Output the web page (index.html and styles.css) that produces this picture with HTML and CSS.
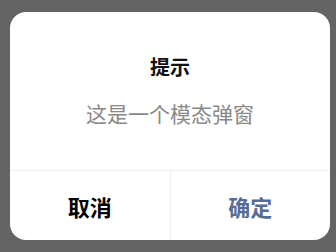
FILE: index.html
```html
<!DOCTYPE html>
<html lang="zh">
<head>
<meta charset="utf-8">
<link rel="stylesheet" href="styles.css">
</head>
<body>
<div class="dialog">
  <div class="body">
    <div class="title">提示</div>
    <div class="content">这是一个模态弹窗</div>
  </div>
  <div class="footer">
    <div class="btn cancel">取消</div>
    <div class="btn confirm">确定</div>
  </div>
</div>
</body>
</html>
```

FILE: styles.css
```css
html, body {
  margin: 0;
  padding: 0;
  width: 336px;
  height: 252px;
  background: #646464;
  overflow: hidden;
}
body {
  padding: 12px 6px 0 10px;
  box-sizing: border-box;
  font-family: "Noto Sans CJK SC", "Noto Sans", sans-serif;
}
.dialog {
  width: 320px;
  height: 228px;
  background: #fff;
  border-radius: 16px;
  display: flex;
  flex-direction: column;
  overflow: hidden;
}
.body {
  height: 158px;
  display: flex;
  flex-direction: column;
  align-items: center;
  box-sizing: border-box;
  padding-top: 41px;
}
.title {
  font-size: 20px;
  font-weight: bold;
  color: #111;
  line-height: 28px;
}
.content {
  margin-top: 18px;
  font-size: 21px;
  color: #888;
  line-height: 28px;
}
.footer {
  flex: 1;
  display: flex;
  border-top: 1px solid #eeeeee;
}
.btn {
  flex: 1;
  display: flex;
  align-items: center;
  justify-content: center;
  font-size: 22px;
  font-weight: bold;
}
.cancel {
  color: #000;
  border-right: 1px solid #eeeeee;
}
.confirm {
  color: #576b95;
}
```
